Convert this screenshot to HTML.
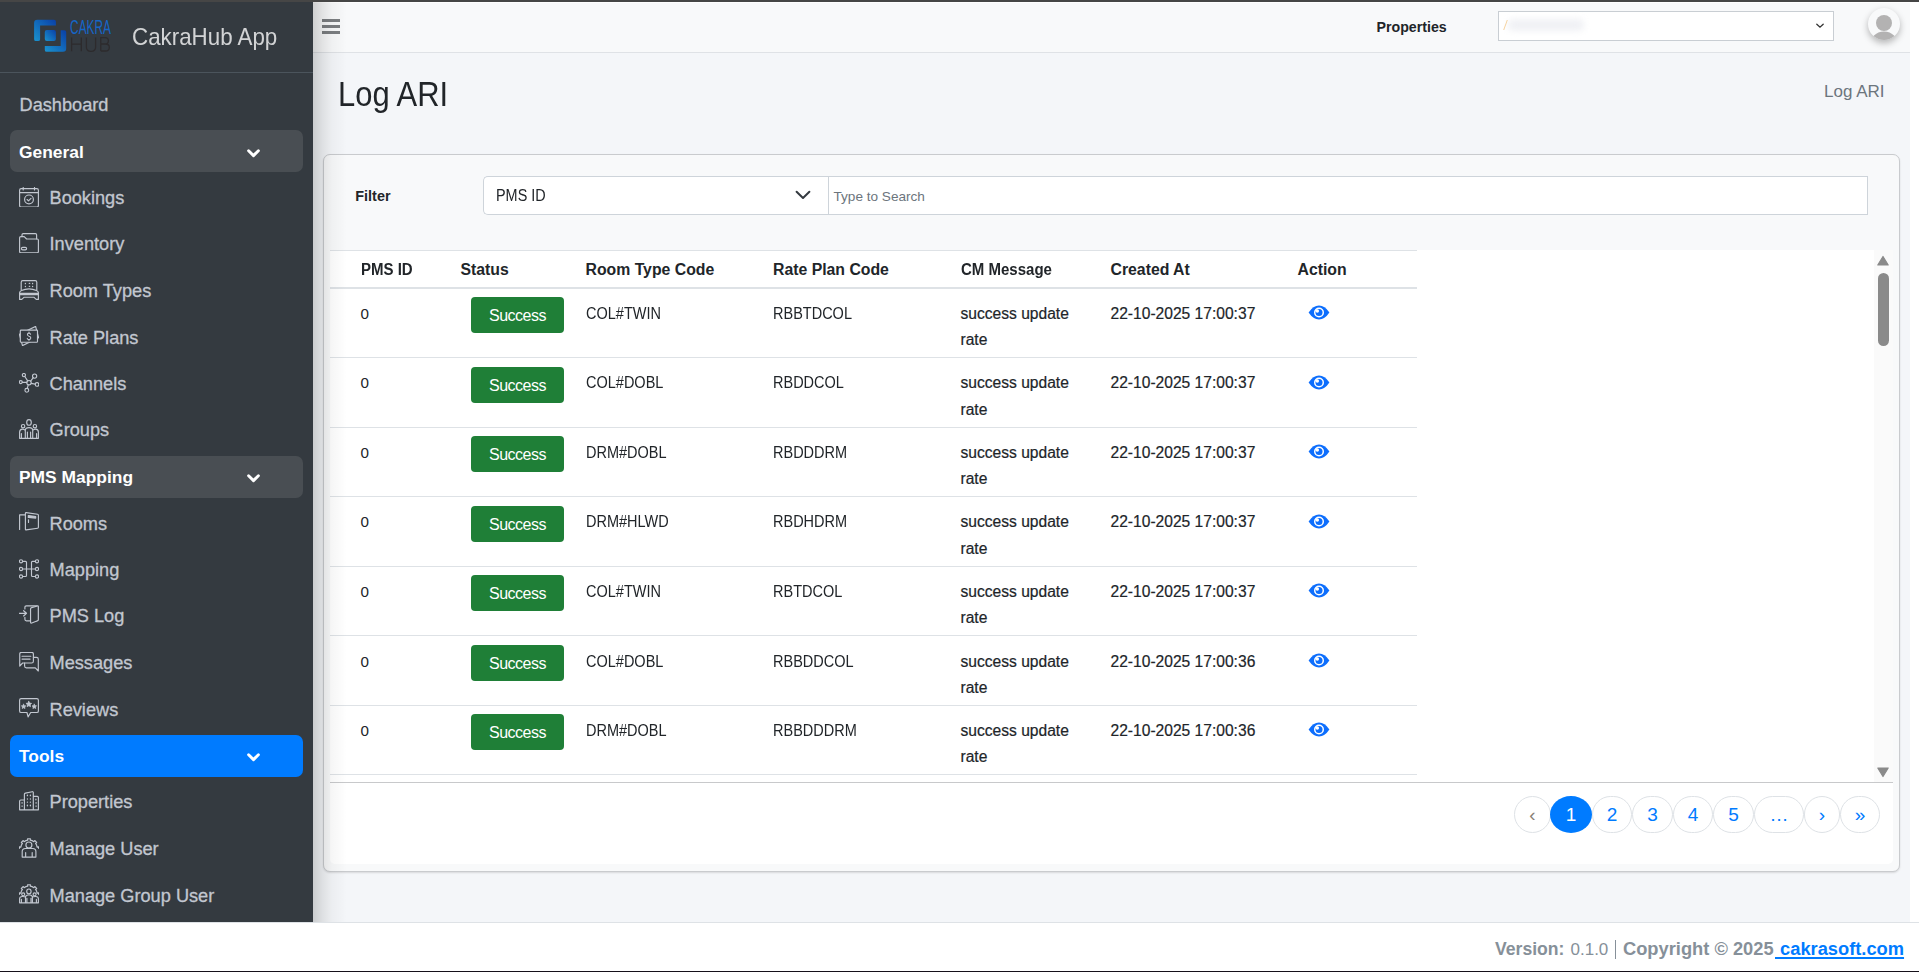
<!DOCTYPE html>
<html><head><meta charset="utf-8"><style>
*{box-sizing:border-box;margin:0;padding:0}
html,body{width:1919px;height:972px;overflow:hidden;background:#fff;font-family:"Liberation Sans",sans-serif}
.a{position:absolute}
.t{white-space:nowrap}
svg{display:block}
</style></head><body>
<div class="a" style="left:313px;top:2px;width:1597px;height:920px;background:#f4f6f9"></div>
<div class="a" style="left:313px;top:2px;width:1597px;height:51px;background:#f8f9fa;border-bottom:1px solid #dfe2e6"></div>
<div class="a" style="left:1910px;top:2px;width:9px;height:920px;background:#fff"></div>
<div class="a" style="left:0;top:2px;width:313px;height:920px;background:#343a40"></div>
<div class="a" style="left:0;top:72px;width:313px;height:1px;background:#4b545c"></div>
<div class="a" style="left:0;top:0;width:1919px;height:2px;background:#464646"></div>
<div class="a" style="left:0;top:922px;width:1919px;height:49px;background:#fff;border-top:1px solid #dee2e6"></div>
<div class="a" style="left:0;top:971px;width:1919px;height:1px;background:#16111a"></div>
<svg class="a" style="left:30px;top:16px" width="90" height="40" viewBox="0 0 90 40">
<defs><linearGradient id="lg1" x1="0" y1="1" x2="1" y2="0"><stop offset="0" stop-color="#1a93cf"/><stop offset="1" stop-color="#0a3fa6"/></linearGradient></defs>
<path d="M4.1 6.9a3.2 3.2 0 0 1 3.2-3.2H24a1.9 1.9 0 0 1 1.9 1.9V9.5H10.1V23.2a1.9 1.9 0 0 1-1.9 1.9H6a1.9 1.9 0 0 1-1.9-1.9Z" fill="url(#lg1)"/>
<rect x="14.8" y="14" width="11.1" height="11.1" rx="2" fill="url(#lg1)"/>
<path d="M30.7 14.2H34.3a1.9 1.9 0 0 1 1.9 1.9V32.6a3.2 3.2 0 0 1-3.2 3.2H16.7a1.9 1.9 0 0 1-1.9-1.9V30H30.7Z" fill="url(#lg1)"/>
<text x="40.1" y="17.9" font-family="Liberation Sans" font-size="19.6" fill="#1566c8" textLength="40.9" lengthAdjust="spacingAndGlyphs">CAKRA</text>
<g fill="none" stroke="#2d2b2d" stroke-width="1.3">
<path d="M41.6 21.4V35.2M51.3 21.4V35.2M41.6 28.1H51.3"/>
<path d="M56.4 21.4V31.2Q56.4 35.3 61 35.3Q65.6 35.3 65.6 31.2V21.4"/>
<path d="M70.8 35H75.6Q79.3 35 79.3 31.2Q79.3 28 75.6 28H70.8M70.8 35V21.6H75.2Q78.4 21.6 78.4 24.8Q78.4 28 75.2 28"/>
</g>
</svg>
<div class="a t " style="left:131.5px;top:24px;font-size:23.4px;line-height:26px;color:rgba(255,255,255,.78);font-weight:normal;transform:scaleX(.955);transform-origin:0 0">CakraHub App</div>
<div class="a t " style="left:19.5px;top:95px;font-size:18.2px;line-height:20px;color:#c2c7d0;font-weight:normal;-webkit-text-stroke:0.3px #c2c7d0">Dashboard</div>
<div class="a" style="left:10px;top:130.2px;width:293px;height:42px;border-radius:7px;background:#494e53"></div>
<div class="a t " style="left:19px;top:142px;font-size:17.4px;line-height:20px;color:#fff;font-weight:bold;">General</div>
<svg class="a" style="left:247px;top:148.9px" width="13" height="9" viewBox="0 0 13 9"><path d="M1.6 1.8L6.5 6.6L11.4 1.8" fill="none" stroke="#fff" stroke-width="2.9" stroke-linecap="round" stroke-linejoin="round"/></svg>
<div class="a" style="left:19px;top:186.7px;width:20px;height:20px"><svg width="20" height="20" viewBox="0 0 20 20" fill="none" stroke="#c2c7d0" stroke-width="1.15" stroke-linecap="round" stroke-linejoin="round"><rect x="0.6" y="1.6" width="18.8" height="18.4" rx="1.6"/><path d="M4.2 0.4v2.6M15.5 0.4v2.6M0.6 5.6h18.8"/><circle cx="10" cy="12.4" r="4.4"/><path d="M8.1 12.5l1.4 1.3 2.5-2.5"/></svg></div>
<div class="a t " style="left:49.5px;top:188px;font-size:18.2px;line-height:20px;color:#c2c7d0;font-weight:normal;-webkit-text-stroke:0.3px #c2c7d0">Bookings</div>
<div class="a" style="left:19px;top:233.2px;width:20px;height:20px"><svg width="20" height="20" viewBox="0 0 20 20" fill="none" stroke="#c2c7d0" stroke-width="1.15" stroke-linecap="round" stroke-linejoin="round"><path d="M3 3.6V1.8Q3 0.6 4.2 0.6H16.4Q17.6 0.6 17.6 1.8V5.8"/><path d="M0.6 19V4.8Q0.6 3.6 1.8 3.6H5.2L7.6 6H18.2Q19.4 6 19.4 7.2V18.6Q19.4 19.8 18.2 19.8H1.8Q0.6 19.8 0.6 18.6Z"/><rect x="2.4" y="14.3" width="5.2" height="2.6" rx="1.3"/></svg></div>
<div class="a t " style="left:49.5px;top:234px;font-size:18.2px;line-height:20px;color:#c2c7d0;font-weight:normal;-webkit-text-stroke:0.3px #c2c7d0">Inventory</div>
<div class="a" style="left:19px;top:279.7px;width:20px;height:20px"><svg width="20" height="20" viewBox="0 0 20 20" fill="none" stroke="#c2c7d0" stroke-width="1.15" stroke-linecap="round" stroke-linejoin="round"><path d="M2.2 9.8V2.2Q2.2 0.6 3.8 0.6H16.2Q17.8 0.6 17.8 2.2V9.8"/><path d="M6.4 3.4v0.3M6.4 6.3v0.3M10.3 3.4h0.4M10.3 6.3h0.4M13.6 3.4v0.3M13.6 6.3v0.3" stroke-width="1.3"/><path d="M0.6 19.4V12.8Q0.6 11.3 2.5 10.5Q6 8.8 10 8.8Q14 8.8 17.5 10.5Q19.4 11.3 19.4 12.8V19.4H17.2L14.8 17.2H5.2L2.8 19.4H0.6"/><path d="M0.6 13.4H19.4M0.6 14.6H19.4"/></svg></div>
<div class="a t " style="left:49.5px;top:281px;font-size:18.2px;line-height:20px;color:#c2c7d0;font-weight:normal;-webkit-text-stroke:0.3px #c2c7d0">Room Types</div>
<div class="a" style="left:19px;top:326.2px;width:20px;height:20px"><svg width="20" height="20" viewBox="0 0 20 20" fill="none" stroke="#c2c7d0" stroke-width="1.15" stroke-linecap="round" stroke-linejoin="round"><path d="M0.4 8.2L16.6 0.4L19.6 11.8L3.5 19.6Z"/><rect x="1.3" y="4.1" width="17.2" height="12.1" rx="0.8" fill="#343a40"/><path d="M11.6 8.3Q11.2 7.1 10 7.1Q8.4 7.1 8.4 8.6Q8.4 9.8 10 10.2Q11.8 10.6 11.8 12Q11.8 13.6 10 13.6Q8.6 13.6 8.2 12.4M10 6.1V7.1M10 13.6V14.4" stroke-width="1.05"/></svg></div>
<div class="a t " style="left:49.5px;top:328px;font-size:18.2px;line-height:20px;color:#c2c7d0;font-weight:normal;-webkit-text-stroke:0.3px #c2c7d0">Rate Plans</div>
<div class="a" style="left:19px;top:372.7px;width:20px;height:20px"><svg width="20" height="20" viewBox="0 0 20 20" fill="none" stroke="#c2c7d0" stroke-width="1.15" stroke-linecap="round" stroke-linejoin="round"><circle cx="10" cy="9.7" r="2.2"/><circle cx="4.9" cy="2.1" r="1.6"/><circle cx="15.6" cy="3.1" r="2.1"/><circle cx="1.8" cy="9.1" r="1.5"/><circle cx="18" cy="11.4" r="1.8"/><circle cx="7.8" cy="17.3" r="1.9"/><path d="M5.8 3.5L8.7 7.9M14.3 4.7L11.6 8.1M3.3 9.3H7.8M12.1 10.4L16.3 11.1M9.2 11.8L8.3 15.4"/></svg></div>
<div class="a t " style="left:49.5px;top:374px;font-size:18.2px;line-height:20px;color:#c2c7d0;font-weight:normal;-webkit-text-stroke:0.3px #c2c7d0">Channels</div>
<div class="a" style="left:19px;top:419.2px;width:20px;height:20px"><svg width="20" height="20" viewBox="0 0 20 20" fill="none" stroke="#c2c7d0" stroke-width="1.15" stroke-linecap="round" stroke-linejoin="round"><ellipse cx="10" cy="3.4" rx="2.3" ry="2.8"/><circle cx="4.1" cy="7.2" r="1.7"/><circle cx="15.9" cy="7.2" r="1.7"/><path d="M0.6 19.3H19.4M6.3 19.3V11.5Q6.3 8.6 10 8.6Q13.7 8.6 13.7 11.5V19.3M6.3 11.5Q5.3 10.1 3.5 10.1Q0.6 10.1 0.6 13.2V19.3M13.7 11.5Q14.7 10.1 16.5 10.1Q19.4 10.1 19.4 13.2V19.3M8.4 19.3V13M11.6 19.3V13M2.4 19.3V14.6M17.6 19.3V14.6"/></svg></div>
<div class="a t " style="left:49.5px;top:420px;font-size:18.2px;line-height:20px;color:#c2c7d0;font-weight:normal;-webkit-text-stroke:0.3px #c2c7d0">Groups</div>
<div class="a" style="left:10px;top:455.7px;width:293px;height:42px;border-radius:7px;background:#494e53"></div>
<div class="a t " style="left:19px;top:467px;font-size:17.4px;line-height:20px;color:#fff;font-weight:bold;">PMS Mapping</div>
<svg class="a" style="left:247px;top:474.4px" width="13" height="9" viewBox="0 0 13 9"><path d="M1.6 1.8L6.5 6.6L11.4 1.8" fill="none" stroke="#fff" stroke-width="2.9" stroke-linecap="round" stroke-linejoin="round"/></svg>
<div class="a" style="left:19px;top:512.2px;width:20px;height:20px"><svg width="20" height="20" viewBox="0 0 20 20" fill="none" stroke="#c2c7d0" stroke-width="1.15" stroke-linecap="round" stroke-linejoin="round"><path d="M0.6 17.5V2.8H5.8"/><path d="M7.2 0.6L18.6 2.2Q19.4 2.3 19.4 3.2V15.3Q19.4 16.2 18.6 16.3L7.2 17.9Q6.4 18 6.4 17.2V1.4Q6.4 0.5 7.2 0.6Z"/><path d="M9.3 3.6L16.7 4.5V6.1L9.3 5.4Z" fill="#c2c7d0"/><path d="M9.5 7.8V10.4"/></svg></div>
<div class="a t " style="left:49.5px;top:514px;font-size:18.2px;line-height:20px;color:#c2c7d0;font-weight:normal;-webkit-text-stroke:0.3px #c2c7d0">Rooms</div>
<div class="a" style="left:19px;top:558.7px;width:20px;height:20px"><svg width="20" height="20" viewBox="0 0 20 20" fill="none" stroke="#c2c7d0" stroke-width="1.15" stroke-linecap="round" stroke-linejoin="round"><circle cx="2" cy="2.3" r="1.6"/><circle cx="2" cy="10" r="1.6"/><circle cx="2" cy="17.5" r="1.6"/><circle cx="18" cy="2.3" r="1.6"/><circle cx="18" cy="10" r="1.6"/><circle cx="18" cy="17.5" r="1.6"/><path d="M3.6 2.3H6.5Q7.5 2.3 7.5 3.3V16.5Q7.5 17.5 6.5 17.5H3.6M16.4 2.3H13.5Q12.5 2.3 12.5 3.3V16.5Q12.5 17.5 13.5 17.5H16.4M3.6 10H16.4"/></svg></div>
<div class="a t " style="left:49.5px;top:560px;font-size:18.2px;line-height:20px;color:#c2c7d0;font-weight:normal;-webkit-text-stroke:0.3px #c2c7d0">Mapping</div>
<div class="a" style="left:19px;top:605.2px;width:20px;height:20px"><svg width="20" height="20" viewBox="0 0 20 20" fill="none" stroke="#c2c7d0" stroke-width="1.15" stroke-linecap="round" stroke-linejoin="round"><path d="M5.9 3.9V2.3Q5.9 0.8 7.4 0.8H17.8Q19.3 0.8 19.3 2.3V14.3Q19.3 15.8 17.8 15.8H7.4Q5.9 15.8 5.9 14.3V12.3"/><path d="M12.6 2.6L18.5 1Q19.3 0.8 19.3 1.6V14.6Q19.3 15.5 18.5 15.8L12.8 18Q11.55 18.4 11.55 17.2V3.9Q11.55 2.9 12.6 2.6Z" fill="#343a40"/><path d="M0.4 8.3H7.4M4.6 5.7L7.5 8.3L4.6 11"/></svg></div>
<div class="a t " style="left:49.5px;top:606px;font-size:18.2px;line-height:20px;color:#c2c7d0;font-weight:normal;-webkit-text-stroke:0.3px #c2c7d0">PMS Log</div>
<div class="a" style="left:19px;top:651.7px;width:20px;height:20px"><svg width="20" height="20" viewBox="0 0 20 20" fill="none" stroke="#c2c7d0" stroke-width="1.15" stroke-linecap="round" stroke-linejoin="round"><path d="M0.75 14.1V2.1Q0.75 0.3 2.55 0.3H12.6Q14.4 0.3 14.4 2.1V9.2Q14.4 11 12.6 11H3.6Z"/><path d="M3 4.2H11.8M3 7.1H11.1"/><path d="M14.4 5.35H17.5Q19.3 5.35 19.3 7.15V19L16.3 15.9H7.4Q5.6 15.9 5.6 14.1V11"/></svg></div>
<div class="a t " style="left:49.5px;top:653px;font-size:18.2px;line-height:20px;color:#c2c7d0;font-weight:normal;-webkit-text-stroke:0.3px #c2c7d0">Messages</div>
<div class="a" style="left:19px;top:698.2px;width:20px;height:20px"><svg width="20" height="20" viewBox="0 0 20 20" fill="none" stroke="#c2c7d0" stroke-width="1.15" stroke-linecap="round" stroke-linejoin="round"><path d="M2.2 0.6H17.8Q19.4 0.6 19.4 2.2V12.9Q19.4 14.5 17.8 14.5H11.7L9.1 18.9L7.95 14.5H2.2Q0.6 14.5 0.6 12.9V2.2Q0.6 0.6 2.2 0.6Z"/><polygon points="9.80,3.30 10.68,5.09 12.65,5.37 11.23,6.76 11.56,8.73 9.80,7.80 8.04,8.73 8.37,6.76 6.95,5.37 8.92,5.09" fill="#c2c7d0" stroke-width="0.7"/><polygon points="4.60,6.20 5.31,7.63 6.88,7.86 5.74,8.97 6.01,10.54 4.60,9.80 3.19,10.54 3.46,8.97 2.32,7.86 3.89,7.63" fill="#c2c7d0" stroke-width="0.7"/><polygon points="15.30,6.20 16.01,7.63 17.58,7.86 16.44,8.97 16.71,10.54 15.30,9.80 13.89,10.54 14.16,8.97 13.02,7.86 14.59,7.63" fill="#c2c7d0" stroke-width="0.7"/></svg></div>
<div class="a t " style="left:49.5px;top:700px;font-size:18.2px;line-height:20px;color:#c2c7d0;font-weight:normal;-webkit-text-stroke:0.3px #c2c7d0">Reviews</div>
<div class="a" style="left:10px;top:734.7px;width:293px;height:42px;border-radius:7px;background:#007bff"></div>
<div class="a t " style="left:19px;top:746px;font-size:17.4px;line-height:20px;color:#fff;font-weight:bold;">Tools</div>
<svg class="a" style="left:247px;top:753.4px" width="13" height="9" viewBox="0 0 13 9"><path d="M1.6 1.8L6.5 6.6L11.4 1.8" fill="none" stroke="#fff" stroke-width="2.9" stroke-linecap="round" stroke-linejoin="round"/></svg>
<div class="a" style="left:19px;top:791.2px;width:20px;height:20px"><svg width="20" height="20" viewBox="0 0 20 20" fill="none" stroke="#c2c7d0" stroke-width="1.15" stroke-linecap="round" stroke-linejoin="round"><path d="M0.6 18.8H19.4M0.6 18.8V10.2Q0.6 9 1.8 9H5.4M5.4 18.8V3.3Q5.4 2.3 6.4 2.1L13.2 0.7Q14.3 0.5 14.3 1.6V18.8M14.3 5.4H18.3Q19.4 5.4 19.4 6.5V18.8"/><path d="M8.4 4.1v0.6M11.4 4.1v0.6M8.4 7.9v0.1M11.4 7.9v0.1M8.4 11.1v0.1M11.4 11.1v0.1M8.4 14.2v0.6M11.4 14.2v0.6M2.9 11.9h0.4M2.9 15.1h0.4M16.9 8.2v0.6M16.9 11.9h0.4M16.9 15.1h0.4" stroke-width="1.3"/></svg></div>
<div class="a t " style="left:49.5px;top:792px;font-size:18.2px;line-height:20px;color:#c2c7d0;font-weight:normal;-webkit-text-stroke:0.3px #c2c7d0">Properties</div>
<div class="a" style="left:19px;top:837.7px;width:20px;height:20px"><svg width="20" height="20" viewBox="0 0 20 20" fill="none" stroke="#c2c7d0" stroke-width="1.15" stroke-linecap="round" stroke-linejoin="round"><path d="M0.40 10.30 A9.6 9.6 0 0 1 0.51 8.88 L1.89 9.09 A8.2 8.2 0 0 1 3.41 5.42 L2.28 4.59 A9.6 9.6 0 0 1 4.29 2.58 L5.12 3.71 A8.2 8.2 0 0 1 8.79 2.19 L8.58 0.81 A9.6 9.6 0 0 1 11.42 0.81 L11.21 2.19 A8.2 8.2 0 0 1 14.88 3.71 L15.71 2.58 A9.6 9.6 0 0 1 17.72 4.59 L16.59 5.42 A8.2 8.2 0 0 1 18.11 9.09 L19.49 8.88 A9.6 9.6 0 0 1 19.60 10.30" /><circle cx="9.9" cy="7" r="3"/><path d="M3.2 19.1V13.6Q3.2 10.5 6.3 10.5H13.8Q16.9 10.5 16.9 13.6V19.1ZM6.65 19.1V14.5M13.2 19.1V14.5"/></svg></div>
<div class="a t " style="left:49.5px;top:839px;font-size:18.2px;line-height:20px;color:#c2c7d0;font-weight:normal;-webkit-text-stroke:0.3px #c2c7d0">Manage User</div>
<div class="a" style="left:19px;top:884.2px;width:20px;height:20px"><svg width="20" height="20" viewBox="0 0 20 20" fill="none" stroke="#c2c7d0" stroke-width="1.15" stroke-linecap="round" stroke-linejoin="round"><path d="M0.40 10.30 A9.6 9.6 0 0 1 0.51 8.88 L1.89 9.09 A8.2 8.2 0 0 1 3.41 5.42 L2.28 4.59 A9.6 9.6 0 0 1 4.29 2.58 L5.12 3.71 A8.2 8.2 0 0 1 8.79 2.19 L8.58 0.81 A9.6 9.6 0 0 1 11.42 0.81 L11.21 2.19 A8.2 8.2 0 0 1 14.88 3.71 L15.71 2.58 A9.6 9.6 0 0 1 17.72 4.59 L16.59 5.42 A8.2 8.2 0 0 1 18.11 9.09 L19.49 8.88 A9.6 9.6 0 0 1 19.60 10.30" /><ellipse cx="9.9" cy="7.4" rx="2.2" ry="2.4"/><circle cx="4.2" cy="10.3" r="1.5"/><circle cx="15.6" cy="10.3" r="1.5"/><path d="M0.6 18.8H19.4M6.5 18.8V13.6Q6.5 11 9.2 11H10.8Q13.4 11 13.4 13.6V18.8M6.5 13.2Q5.8 12.4 3.2 12.5Q0.6 12.6 0.6 14.8V18.8M13.4 13.2Q14.2 12.4 16.8 12.5Q19.4 12.6 19.4 14.8V18.8M7.9 18.8V14.3M12 18.8V14.3M2.4 18.8V15.3M17.4 18.8V15.3"/></svg></div>
<div class="a t " style="left:49.5px;top:886px;font-size:18.2px;line-height:20px;color:#c2c7d0;font-weight:normal;-webkit-text-stroke:0.3px #c2c7d0">Manage Group User</div>
<div class="a" style="left:322px;top:19px;width:18px;height:2.7px;background:#7b7e81"></div>
<div class="a" style="left:322px;top:25.1px;width:18px;height:2.7px;background:#7b7e81"></div>
<div class="a" style="left:322px;top:31.2px;width:18px;height:2.7px;background:#7b7e81"></div>
<div class="a t " style="left:1376.5px;top:19px;font-size:14.2px;line-height:16px;color:#212529;font-weight:bold;">Properties</div>
<div class="a" style="left:1498px;top:11px;width:336px;height:30px;background:#fff;border:1px solid #c9ced3"></div>
<div class="a" style="left:1508px;top:19px;width:76px;height:12px;background:#f0f1f5;filter:blur(3px);border-radius:5px"></div>
<div class="a" style="left:1505px;top:20px;width:1px;height:10px;background:#f6d3a0;transform:skewX(-20deg)"></div>
<svg class="a" style="left:1815px;top:22px" width="10" height="8" viewBox="0 0 10 8"><path d="M1.8 2.2L5 5.2L8.2 2.2" fill="none" stroke="#333" stroke-width="1.3" stroke-linecap="round"/></svg>
<div class="a" style="left:1868px;top:8px;width:32px;height:32px;border-radius:50%;background:#f8f9fa;box-shadow:0 3px 7px rgba(0,0,0,.28);overflow:hidden">
<svg width="32" height="32" viewBox="0 0 32 32"><circle cx="16" cy="15" r="8" fill="#b3b2b2"/><circle cx="16" cy="38" r="14.6" fill="#b3b2b2"/></svg></div>
<div class="a" style="left:313px;top:2px;width:1597px;height:1px;background:#fff"></div>
<div class="a t " style="left:338.3px;top:75px;font-size:34.6px;line-height:38px;color:#212529;font-weight:normal;transform:scaleX(.895);transform-origin:0 0">Log ARI</div>
<div class="a t " style="left:1824px;top:82px;font-size:17px;line-height:19px;color:#6c757d;font-weight:normal;">Log ARI</div>
<div class="a" style="left:323px;top:154px;width:1577px;height:718px;border-radius:7px;background:#f8f9fa;border:1px solid #c9cbce;box-shadow:0 1px 2px rgba(0,0,0,.12)"></div>
<div class="a t " style="left:355.3px;top:188px;font-size:14.4px;line-height:16px;color:#212529;font-weight:bold;">Filter</div>
<div class="a" style="left:483px;top:176px;width:346px;height:39px;background:#fff;border:1px solid #ced4da;border-right:none;border-radius:5px 0 0 5px"></div>
<div class="a t " style="left:495.5px;top:187px;font-size:15.6px;line-height:17px;color:#212529;font-weight:normal;transform:scaleX(.925);transform-origin:0 0">PMS ID</div>
<svg class="a" style="left:795px;top:190px" width="16" height="10" viewBox="0 0 16 10"><path d="M1.6 1.8L8 8L14.4 1.8" fill="none" stroke="#343a40" stroke-width="2" stroke-linecap="round" stroke-linejoin="round"/></svg>
<div class="a" style="left:828px;top:176px;width:1040px;height:39px;background:#fff;border:1px solid #ced4da"></div>
<div class="a t " style="left:833.5px;top:189px;font-size:13.6px;line-height:15px;color:#6c757d;font-weight:normal;">Type to Search</div>
<div class="a" style="left:330px;top:250px;width:1563px;height:533px;background:#fff;border-bottom:1px solid #c8c9cb"></div>
<div class="a" style="left:1874px;top:250px;width:19px;height:532px;background:#fafafa"></div>
<div class="a" style="left:330px;top:250px;width:1087px;height:1px;background:#dee2e6"></div>
<svg class="a" style="left:1876px;top:255px" width="14" height="12" viewBox="0 0 14 12"><path d="M7 1.5L12.2 10H1.8Z" fill="#8a8a8a" stroke="#8a8a8a" stroke-width="1.2" stroke-linejoin="round"/></svg>
<div class="a" style="left:1878px;top:273px;width:11px;height:73px;border-radius:6px;background:#8a8a8a"></div>
<svg class="a" style="left:1876px;top:766px" width="14" height="12" viewBox="0 0 14 12"><path d="M7 10.5L12.2 2H1.8Z" fill="#8a8a8a" stroke="#8a8a8a" stroke-width="1.2" stroke-linejoin="round"/></svg>
<div class="a t " style="left:360.5px;top:261px;font-size:15.8px;line-height:17px;color:#212529;font-weight:bold;transform:scaleX(.95);transform-origin:0 0">PMS ID</div>
<div class="a t " style="left:460.5px;top:261px;font-size:15.8px;line-height:17px;color:#212529;font-weight:bold;">Status</div>
<div class="a t " style="left:585.5px;top:261px;font-size:15.8px;line-height:17px;color:#212529;font-weight:bold;">Room Type Code</div>
<div class="a t " style="left:773px;top:261px;font-size:15.8px;line-height:17px;color:#212529;font-weight:bold;">Rate Plan Code</div>
<div class="a t " style="left:960.5px;top:261px;font-size:15.8px;line-height:17px;color:#212529;font-weight:bold;transform:scaleX(.95);transform-origin:0 0">CM Message</div>
<div class="a t " style="left:1110.5px;top:261px;font-size:15.8px;line-height:17px;color:#212529;font-weight:bold;">Created At</div>
<div class="a t " style="left:1297.5px;top:261px;font-size:15.8px;line-height:17px;color:#212529;font-weight:bold;">Action</div>
<div class="a" style="left:330px;top:287px;width:1087px;height:2px;background:#dee2e6"></div>
<div class="a t " style="left:360.5px;top:305px;font-size:15.2px;line-height:17px;color:#212529;font-weight:normal;">0</div>
<div class="a" style="left:471px;top:297.0px;width:93px;height:36px;border-radius:4px;background:#1f7f37"></div>
<div class="a t " style="left:489px;top:307px;font-size:16px;line-height:17px;color:#fff;font-weight:normal;letter-spacing:-0.5px">Success</div>
<div class="a t " style="left:585.5px;top:305px;font-size:15.6px;line-height:17px;color:#212529;font-weight:normal;transform:scaleX(.93);transform-origin:0 0">COL#TWIN</div>
<div class="a t " style="left:773.3px;top:305px;font-size:15.6px;line-height:17px;color:#212529;font-weight:normal;transform:scaleX(.93);transform-origin:0 0">RBBTDCOL</div>
<div class="a t " style="left:960.5px;top:305px;font-size:15.6px;line-height:17px;color:#212529;font-weight:normal;-webkit-text-stroke:0.2px #212529">success update</div>
<div class="a t " style="left:960.5px;top:331px;font-size:15.6px;line-height:17px;color:#212529;font-weight:normal;-webkit-text-stroke:0.2px #212529">rate</div>
<div class="a t " style="left:1110.5px;top:305px;font-size:15.6px;line-height:17px;color:#212529;font-weight:normal;-webkit-text-stroke:0.2px #212529">22-10-2025 17:00:37</div>
<svg class="a" style="left:1308px;top:305.0px" width="22" height="15" viewBox="0 0 22 15"><path d="M0.6 7.5Q5.2 0.6 11 0.6Q16.8 0.6 21.4 7.5Q16.8 14.4 11 14.4Q5.2 14.4 0.6 7.5Z" fill="#0d6efd"/><circle cx="11" cy="7.5" r="5" fill="#fff"/><circle cx="11" cy="7.6" r="3.5" fill="#0d6efd"/><circle cx="9.3" cy="5.9" r="1.75" fill="#fff"/></svg>
<div class="a" style="left:330px;top:357.0px;width:1087px;height:1px;background:#dee2e6"></div>
<div class="a t " style="left:360.5px;top:374px;font-size:15.2px;line-height:17px;color:#212529;font-weight:normal;">0</div>
<div class="a" style="left:471px;top:366.5px;width:93px;height:36px;border-radius:4px;background:#1f7f37"></div>
<div class="a t " style="left:489px;top:377px;font-size:16px;line-height:17px;color:#fff;font-weight:normal;letter-spacing:-0.5px">Success</div>
<div class="a t " style="left:585.5px;top:374px;font-size:15.6px;line-height:17px;color:#212529;font-weight:normal;transform:scaleX(.93);transform-origin:0 0">COL#DOBL</div>
<div class="a t " style="left:773.3px;top:374px;font-size:15.6px;line-height:17px;color:#212529;font-weight:normal;transform:scaleX(.93);transform-origin:0 0">RBDDCOL</div>
<div class="a t " style="left:960.5px;top:374px;font-size:15.6px;line-height:17px;color:#212529;font-weight:normal;-webkit-text-stroke:0.2px #212529">success update</div>
<div class="a t " style="left:960.5px;top:401px;font-size:15.6px;line-height:17px;color:#212529;font-weight:normal;-webkit-text-stroke:0.2px #212529">rate</div>
<div class="a t " style="left:1110.5px;top:374px;font-size:15.6px;line-height:17px;color:#212529;font-weight:normal;-webkit-text-stroke:0.2px #212529">22-10-2025 17:00:37</div>
<svg class="a" style="left:1308px;top:374.5px" width="22" height="15" viewBox="0 0 22 15"><path d="M0.6 7.5Q5.2 0.6 11 0.6Q16.8 0.6 21.4 7.5Q16.8 14.4 11 14.4Q5.2 14.4 0.6 7.5Z" fill="#0d6efd"/><circle cx="11" cy="7.5" r="5" fill="#fff"/><circle cx="11" cy="7.6" r="3.5" fill="#0d6efd"/><circle cx="9.3" cy="5.9" r="1.75" fill="#fff"/></svg>
<div class="a" style="left:330px;top:426.5px;width:1087px;height:1px;background:#dee2e6"></div>
<div class="a t " style="left:360.5px;top:444px;font-size:15.2px;line-height:17px;color:#212529;font-weight:normal;">0</div>
<div class="a" style="left:471px;top:436.1px;width:93px;height:36px;border-radius:4px;background:#1f7f37"></div>
<div class="a t " style="left:489px;top:446px;font-size:16px;line-height:17px;color:#fff;font-weight:normal;letter-spacing:-0.5px">Success</div>
<div class="a t " style="left:585.5px;top:444px;font-size:15.6px;line-height:17px;color:#212529;font-weight:normal;transform:scaleX(.93);transform-origin:0 0">DRM#DOBL</div>
<div class="a t " style="left:773.3px;top:444px;font-size:15.6px;line-height:17px;color:#212529;font-weight:normal;transform:scaleX(.93);transform-origin:0 0">RBDDDRM</div>
<div class="a t " style="left:960.5px;top:444px;font-size:15.6px;line-height:17px;color:#212529;font-weight:normal;-webkit-text-stroke:0.2px #212529">success update</div>
<div class="a t " style="left:960.5px;top:470px;font-size:15.6px;line-height:17px;color:#212529;font-weight:normal;-webkit-text-stroke:0.2px #212529">rate</div>
<div class="a t " style="left:1110.5px;top:444px;font-size:15.6px;line-height:17px;color:#212529;font-weight:normal;-webkit-text-stroke:0.2px #212529">22-10-2025 17:00:37</div>
<svg class="a" style="left:1308px;top:444.1px" width="22" height="15" viewBox="0 0 22 15"><path d="M0.6 7.5Q5.2 0.6 11 0.6Q16.8 0.6 21.4 7.5Q16.8 14.4 11 14.4Q5.2 14.4 0.6 7.5Z" fill="#0d6efd"/><circle cx="11" cy="7.5" r="5" fill="#fff"/><circle cx="11" cy="7.6" r="3.5" fill="#0d6efd"/><circle cx="9.3" cy="5.9" r="1.75" fill="#fff"/></svg>
<div class="a" style="left:330px;top:496.1px;width:1087px;height:1px;background:#dee2e6"></div>
<div class="a t " style="left:360.5px;top:513px;font-size:15.2px;line-height:17px;color:#212529;font-weight:normal;">0</div>
<div class="a" style="left:471px;top:505.6px;width:93px;height:36px;border-radius:4px;background:#1f7f37"></div>
<div class="a t " style="left:489px;top:516px;font-size:16px;line-height:17px;color:#fff;font-weight:normal;letter-spacing:-0.5px">Success</div>
<div class="a t " style="left:585.5px;top:513px;font-size:15.6px;line-height:17px;color:#212529;font-weight:normal;transform:scaleX(.93);transform-origin:0 0">DRM#HLWD</div>
<div class="a t " style="left:773.3px;top:513px;font-size:15.6px;line-height:17px;color:#212529;font-weight:normal;transform:scaleX(.93);transform-origin:0 0">RBDHDRM</div>
<div class="a t " style="left:960.5px;top:513px;font-size:15.6px;line-height:17px;color:#212529;font-weight:normal;-webkit-text-stroke:0.2px #212529">success update</div>
<div class="a t " style="left:960.5px;top:540px;font-size:15.6px;line-height:17px;color:#212529;font-weight:normal;-webkit-text-stroke:0.2px #212529">rate</div>
<div class="a t " style="left:1110.5px;top:513px;font-size:15.6px;line-height:17px;color:#212529;font-weight:normal;-webkit-text-stroke:0.2px #212529">22-10-2025 17:00:37</div>
<svg class="a" style="left:1308px;top:513.6px" width="22" height="15" viewBox="0 0 22 15"><path d="M0.6 7.5Q5.2 0.6 11 0.6Q16.8 0.6 21.4 7.5Q16.8 14.4 11 14.4Q5.2 14.4 0.6 7.5Z" fill="#0d6efd"/><circle cx="11" cy="7.5" r="5" fill="#fff"/><circle cx="11" cy="7.6" r="3.5" fill="#0d6efd"/><circle cx="9.3" cy="5.9" r="1.75" fill="#fff"/></svg>
<div class="a" style="left:330px;top:565.6px;width:1087px;height:1px;background:#dee2e6"></div>
<div class="a t " style="left:360.5px;top:583px;font-size:15.2px;line-height:17px;color:#212529;font-weight:normal;">0</div>
<div class="a" style="left:471px;top:575.1px;width:93px;height:36px;border-radius:4px;background:#1f7f37"></div>
<div class="a t " style="left:489px;top:585px;font-size:16px;line-height:17px;color:#fff;font-weight:normal;letter-spacing:-0.5px">Success</div>
<div class="a t " style="left:585.5px;top:583px;font-size:15.6px;line-height:17px;color:#212529;font-weight:normal;transform:scaleX(.93);transform-origin:0 0">COL#TWIN</div>
<div class="a t " style="left:773.3px;top:583px;font-size:15.6px;line-height:17px;color:#212529;font-weight:normal;transform:scaleX(.93);transform-origin:0 0">RBTDCOL</div>
<div class="a t " style="left:960.5px;top:583px;font-size:15.6px;line-height:17px;color:#212529;font-weight:normal;-webkit-text-stroke:0.2px #212529">success update</div>
<div class="a t " style="left:960.5px;top:609px;font-size:15.6px;line-height:17px;color:#212529;font-weight:normal;-webkit-text-stroke:0.2px #212529">rate</div>
<div class="a t " style="left:1110.5px;top:583px;font-size:15.6px;line-height:17px;color:#212529;font-weight:normal;-webkit-text-stroke:0.2px #212529">22-10-2025 17:00:37</div>
<svg class="a" style="left:1308px;top:583.1px" width="22" height="15" viewBox="0 0 22 15"><path d="M0.6 7.5Q5.2 0.6 11 0.6Q16.8 0.6 21.4 7.5Q16.8 14.4 11 14.4Q5.2 14.4 0.6 7.5Z" fill="#0d6efd"/><circle cx="11" cy="7.5" r="5" fill="#fff"/><circle cx="11" cy="7.6" r="3.5" fill="#0d6efd"/><circle cx="9.3" cy="5.9" r="1.75" fill="#fff"/></svg>
<div class="a" style="left:330px;top:635.1px;width:1087px;height:1px;background:#dee2e6"></div>
<div class="a t " style="left:360.5px;top:653px;font-size:15.2px;line-height:17px;color:#212529;font-weight:normal;">0</div>
<div class="a" style="left:471px;top:644.6px;width:93px;height:36px;border-radius:4px;background:#1f7f37"></div>
<div class="a t " style="left:489px;top:655px;font-size:16px;line-height:17px;color:#fff;font-weight:normal;letter-spacing:-0.5px">Success</div>
<div class="a t " style="left:585.5px;top:653px;font-size:15.6px;line-height:17px;color:#212529;font-weight:normal;transform:scaleX(.93);transform-origin:0 0">COL#DOBL</div>
<div class="a t " style="left:773.3px;top:653px;font-size:15.6px;line-height:17px;color:#212529;font-weight:normal;transform:scaleX(.93);transform-origin:0 0">RBBDDCOL</div>
<div class="a t " style="left:960.5px;top:653px;font-size:15.6px;line-height:17px;color:#212529;font-weight:normal;-webkit-text-stroke:0.2px #212529">success update</div>
<div class="a t " style="left:960.5px;top:679px;font-size:15.6px;line-height:17px;color:#212529;font-weight:normal;-webkit-text-stroke:0.2px #212529">rate</div>
<div class="a t " style="left:1110.5px;top:653px;font-size:15.6px;line-height:17px;color:#212529;font-weight:normal;-webkit-text-stroke:0.2px #212529">22-10-2025 17:00:36</div>
<svg class="a" style="left:1308px;top:652.6px" width="22" height="15" viewBox="0 0 22 15"><path d="M0.6 7.5Q5.2 0.6 11 0.6Q16.8 0.6 21.4 7.5Q16.8 14.4 11 14.4Q5.2 14.4 0.6 7.5Z" fill="#0d6efd"/><circle cx="11" cy="7.5" r="5" fill="#fff"/><circle cx="11" cy="7.6" r="3.5" fill="#0d6efd"/><circle cx="9.3" cy="5.9" r="1.75" fill="#fff"/></svg>
<div class="a" style="left:330px;top:704.6px;width:1087px;height:1px;background:#dee2e6"></div>
<div class="a t " style="left:360.5px;top:722px;font-size:15.2px;line-height:17px;color:#212529;font-weight:normal;">0</div>
<div class="a" style="left:471px;top:714.2px;width:93px;height:36px;border-radius:4px;background:#1f7f37"></div>
<div class="a t " style="left:489px;top:724px;font-size:16px;line-height:17px;color:#fff;font-weight:normal;letter-spacing:-0.5px">Success</div>
<div class="a t " style="left:585.5px;top:722px;font-size:15.6px;line-height:17px;color:#212529;font-weight:normal;transform:scaleX(.93);transform-origin:0 0">DRM#DOBL</div>
<div class="a t " style="left:773.3px;top:722px;font-size:15.6px;line-height:17px;color:#212529;font-weight:normal;transform:scaleX(.93);transform-origin:0 0">RBBDDDRM</div>
<div class="a t " style="left:960.5px;top:722px;font-size:15.6px;line-height:17px;color:#212529;font-weight:normal;-webkit-text-stroke:0.2px #212529">success update</div>
<div class="a t " style="left:960.5px;top:748px;font-size:15.6px;line-height:17px;color:#212529;font-weight:normal;-webkit-text-stroke:0.2px #212529">rate</div>
<div class="a t " style="left:1110.5px;top:722px;font-size:15.6px;line-height:17px;color:#212529;font-weight:normal;-webkit-text-stroke:0.2px #212529">22-10-2025 17:00:36</div>
<svg class="a" style="left:1308px;top:722.2px" width="22" height="15" viewBox="0 0 22 15"><path d="M0.6 7.5Q5.2 0.6 11 0.6Q16.8 0.6 21.4 7.5Q16.8 14.4 11 14.4Q5.2 14.4 0.6 7.5Z" fill="#0d6efd"/><circle cx="11" cy="7.5" r="5" fill="#fff"/><circle cx="11" cy="7.6" r="3.5" fill="#0d6efd"/><circle cx="9.3" cy="5.9" r="1.75" fill="#fff"/></svg>
<div class="a" style="left:330px;top:774.2px;width:1087px;height:1px;background:#dee2e6"></div>
<div class="a" style="left:330px;top:783px;width:1563px;height:81px;background:#fff;border-radius:0 0 5px 5px"></div>
<div class="a" style="left:1514px;top:796px;width:37px;height:37px;border-radius:19px;border:1px solid #dee2e6;color:#8a7f76;font-size:19px;line-height:35px;text-align:center">‹</div>
<div class="a" style="left:1550px;top:796px;width:42px;height:37px;border-radius:50%;background:#007bff;color:#fff;font-size:19px;line-height:37px;text-align:center">1</div>
<div class="a" style="left:1592px;top:796px;width:40px;height:37px;border-radius:19px;border:1px solid #dee2e6;color:#007bff;font-size:19px;line-height:35px;text-align:center">2</div>
<div class="a" style="left:1632px;top:796px;width:41px;height:37px;border-radius:19px;border:1px solid #dee2e6;color:#007bff;font-size:19px;line-height:35px;text-align:center">3</div>
<div class="a" style="left:1673px;top:796px;width:40px;height:37px;border-radius:19px;border:1px solid #dee2e6;color:#007bff;font-size:19px;line-height:35px;text-align:center">4</div>
<div class="a" style="left:1713px;top:796px;width:41px;height:37px;border-radius:19px;border:1px solid #dee2e6;color:#007bff;font-size:19px;line-height:35px;text-align:center">5</div>
<div class="a" style="left:1754px;top:796px;width:50px;height:37px;border-radius:19px;border:1px solid #dee2e6;color:#007bff;font-size:19px;line-height:35px;text-align:center">…</div>
<div class="a" style="left:1804px;top:796px;width:36px;height:37px;border-radius:19px;border:1px solid #dee2e6;color:#007bff;font-size:19px;line-height:35px;text-align:center">›</div>
<div class="a" style="left:1840px;top:796px;width:40px;height:37px;border-radius:19px;border:1px solid #dee2e6;color:#007bff;font-size:19px;line-height:35px;text-align:center">»</div>
<div class="a t " style="left:1495px;top:939px;font-size:17.6px;line-height:20px;color:#869099;font-weight:bold;">Version:</div>
<div class="a t " style="left:1570.5px;top:940px;font-size:17px;line-height:19px;color:#869099;font-weight:normal;">0.1.0</div>
<div class="a" style="left:1615px;top:940px;width:1px;height:19px;background:#869099"></div>
<div class="a t " style="left:1623px;top:938px;font-size:18.3px;line-height:21px;color:#869099;font-weight:bold;">Copyright © 2025</div>
<div class="a t " style="left:1775px;top:938px;font-size:18.3px;line-height:21px;color:#007bff;font-weight:bold;text-decoration:underline;text-decoration-thickness:1.8px;text-underline-offset:2px">&nbsp;cakrasoft.com</div>
<div class="a" style="left:313px;top:2px;width:34px;height:920px;background:linear-gradient(to right,rgba(0,0,0,.17),rgba(0,0,0,.09) 28%,rgba(0,0,0,.035) 55%,rgba(0,0,0,0))"></div>
</body></html>
